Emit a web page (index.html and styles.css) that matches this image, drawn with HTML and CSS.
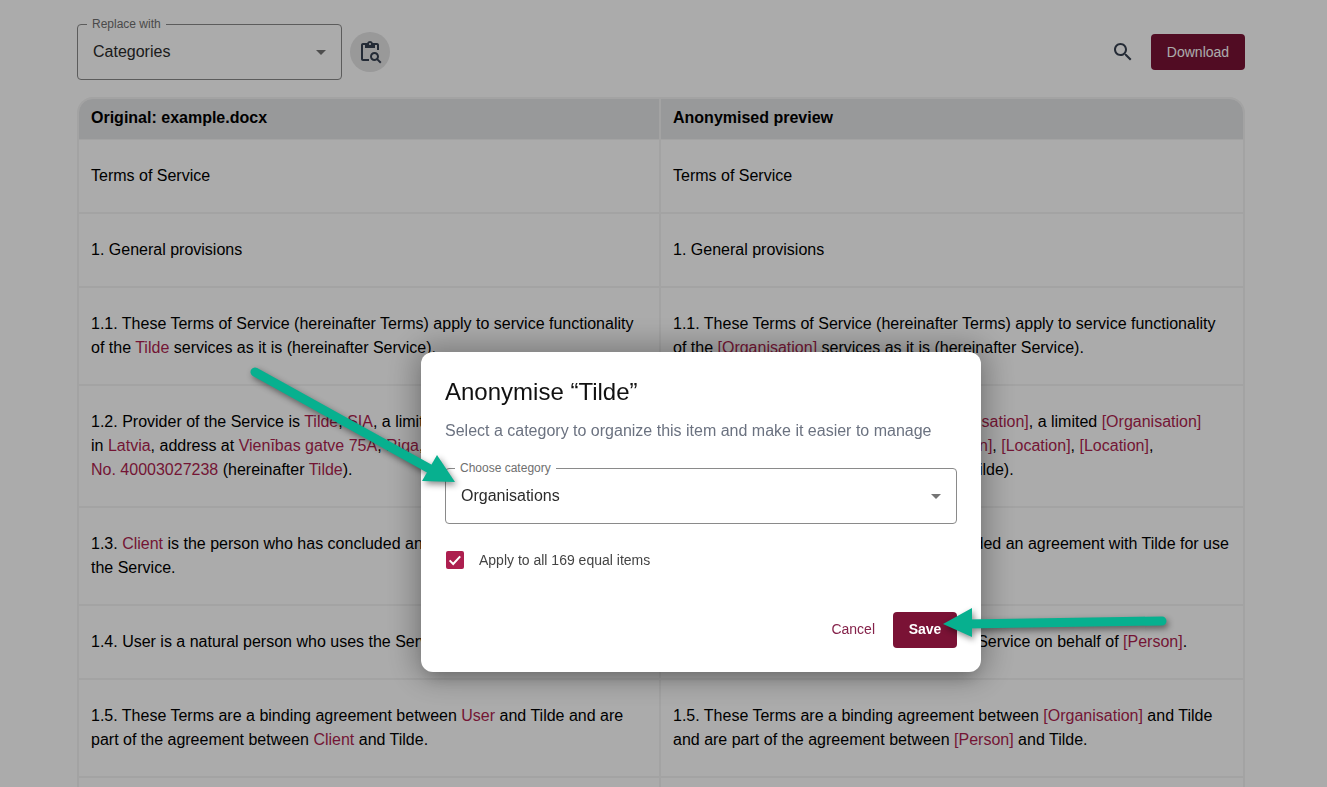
FILE: index.html
```html
<!DOCTYPE html>
<html lang="en">
<head>
    <meta charset="UTF-8">
    <meta name="viewport" content="width=device-width, initial-scale=1.0">
    <title>Anonymise</title>
    <link rel="stylesheet" href="styles.css">
</head>
<body>
    <div class="page">
        <div class="toolbar">
            <div class="field field-replace">
                <span class="field-label">Replace with</span>
                <span class="field-value">Categories</span>
                <svg class="caret" viewBox="0 0 24 24"><path d="M7 10l5 5 5-5z"/></svg>
            </div>
            <button class="round-btn">
                <svg viewBox="0 0 24 24"><path d="M5 5h2v3h10V5h2v5h2V5c0-1.1-.9-2-2-2h-4.18C14.4 1.84 13.3 1 12 1s-2.4.84-2.82 2H5c-1.1 0-2 .9-2 2v14c0 1.1.9 2 2 2h6v-2H5V5zm7-2c.55 0 1 .45 1 1s-.45 1-1 1-1-.45-1-1 .45-1 1-1z"/><path d="M20.3 18.9c.4-.7.7-1.5.7-2.4 0-2.5-2-4.5-4.5-4.5S12 14 12 16.5s2 4.5 4.5 4.5c.9 0 1.7-.3 2.4-.7l3.2 3.2 1.4-1.4-3.2-3.2zm-3.8.1c-1.4 0-2.5-1.1-2.5-2.5s1.1-2.5 2.5-2.5 2.5 1.1 2.5 2.5-1.1 2.5-2.5 2.5z"/></svg>
            </button>
            <div class="toolbar-right">
                <svg class="search-icon" viewBox="0 0 24 24"><path d="M15.5 14h-.79l-.28-.27C15.41 12.59 16 11.11 16 9.5 16 5.91 13.09 3 9.5 3S3 5.91 3 9.5 5.91 16 9.5 16c1.61 0 3.09-.59 4.23-1.57l.27.28v.79l5 4.99L20.49 19l-4.99-5zm-6 0C7.01 14 5 11.99 5 9.5S7.01 5 9.5 5 14 7.01 14 9.5 11.99 14 9.5 14z"/></svg>
                <button class="btn-primary btn-download">Download</button>
            </div>
        </div>

        <div class="doc-table">
            <div class="doc-row doc-head">
                <div class="cell">Original: example.docx</div>
                <div class="cell">Anonymised preview</div>
            </div>
            <div class="doc-row">
                <div class="cell">Terms of Service</div>
                <div class="cell">Terms of Service</div>
            </div>
            <div class="doc-row">
                <div class="cell">1. General provisions</div>
                <div class="cell">1. General provisions</div>
            </div>
            <div class="doc-row">
                <div class="cell">1.1. These Terms of Service (hereinafter Terms) apply to service functionality of the <span class="ent">Tilde</span> services as it is (hereinafter Service).</div>
                <div class="cell">1.1. These Terms of Service (hereinafter Terms) apply to service functionality of the <span class="ent">[Organisation]</span> services as it is (hereinafter Service).</div>
            </div>
            <div class="doc-row">
                <div class="cell">1.2. Provider of the Service is <span class="ent">Tilde</span>, <span class="ent">SIA</span>, a limited liability company registered<br>in <span class="ent">Latvia</span>, address at <span class="ent">Vienības gatve 75A</span>, <span class="ent">Riga</span>, registration<br><span class="ent">No. 40003027238</span> (hereinafter <span class="ent">Tilde</span>).</div>
                <div class="cell">1.2. Provider of the Service is Tilde, <span class="ent">[Organisation]</span>, a limited <span class="ent">[Organisation]</span><br>registered in <span class="ent">[Location]</span>, address at <span class="ent">[Location]</span>, <span class="ent">[Location]</span>, <span class="ent">[Location]</span>,<br><span class="ent">[Location]</span>, <span class="ent">[Person]</span>, <span class="ent">[Person]</span> (hereinafter Tilde).</div>
            </div>
            <div class="doc-row">
                <div class="cell">1.3. <span class="ent">Client</span> is the person who has concluded an agreement with Tilde for use the Service.</div>
                <div class="cell">1.3. <span class="ent">[Person]</span> is the person who has concluded an agreement with Tilde for use the Service.</div>
            </div>
            <div class="doc-row">
                <div class="cell">1.4. User is a natural person who uses the Service on behalf of <span class="ent">Client</span>.</div>
                <div class="cell">1.4. User is a natural person who uses the Service on behalf of <span class="ent">[Person]</span>.</div>
            </div>
            <div class="doc-row">
                <div class="cell">1.5. These Terms are a binding agreement between <span class="ent">User</span> and Tilde and are part of the agreement between <span class="ent">Client</span> and Tilde.</div>
                <div class="cell">1.5. These Terms are a binding agreement between <span class="ent">[Organisation]</span> and Tilde and are part of the agreement between <span class="ent">[Person]</span> and Tilde.</div>
            </div>
            <div class="doc-row">
                <div class="cell">2. Use of the Service</div>
                <div class="cell">2. Use of the Service</div>
            </div>
        </div>
    </div>

    <div class="overlay">
        <div class="dialog">
            <h2 class="dialog-title">Anonymise “Tilde”</h2>
            <p class="dialog-desc">Select a category to organize this item and make it easier to manage</p>
            <div class="field field-category">
                <span class="field-label">Choose category</span>
                <span class="field-value">Organisations</span>
                <svg class="caret" viewBox="0 0 24 24"><path d="M7 10l5 5 5-5z"/></svg>
            </div>
            <label class="check-row">
                <span class="check-box">
                    <svg viewBox="0 0 18 18"><path d="M3.6 9.4l3.6 3.6 7-7.6" fill="none" stroke="#fff" stroke-width="2"/></svg>
                </span>
                <span class="check-text">Apply to all 169 equal items</span>
            </label>
            <div class="dialog-actions">
                <button class="btn-text">Cancel</button>
                <button class="btn-primary btn-save">Save</button>
            </div>
        </div>
    </div>

    <svg class="arrows" viewBox="0 0 1327 787">
        <g class="arrow">
            <path d="M255 372 L430 469" fill="none" stroke="#07b08f" stroke-width="9" stroke-linecap="round"/>
            <path d="M455 482 L437 455 L422 481 Z" fill="#07b08f"/>
        </g>
        <g class="arrow">
            <path d="M1162 621 L965 624" fill="none" stroke="#07b08f" stroke-width="9" stroke-linecap="round"/>
            <path d="M943 624 L972 608 L972 637 Z" fill="#07b08f"/>
        </g>
    </svg>
</body>
</html>
```

FILE: styles.css
```css
* {
    box-sizing: border-box;
}

html, body {
    margin: 0;
    padding: 0;
    height: 100%;
    overflow: hidden;
    font-family: "Liberation Sans", Arial, sans-serif;
    color: #000;
    background-color: #fff;
}

.page {
    padding: 24px 82px 0 77px;
}

.toolbar {
    display: flex;
    align-items: center;
    height: 56px;
    margin-bottom: 17px;
}

.field {
    position: relative;
    display: flex;
    align-items: center;
    height: 56px;
    padding: 0 15px;
    border: 1px solid #8a8a8a;
    border-radius: 4px;
    font-size: 16px;
    color: #2b2b2b;
}

.field-replace {
    width: 265px;
}

.field-label {
    position: absolute;
    top: -8px;
    left: 9px;
    padding: 0 5px;
    background-color: #fff;
    font-size: 12px;
    line-height: 14px;
    color: #6f6f6f;
}

.caret {
    position: absolute;
    right: 8px;
    top: 15px;
    width: 24px;
    height: 24px;
    fill: #757575;
}

.round-btn {
    display: flex;
    align-items: center;
    justify-content: center;
    width: 40px;
    height: 40px;
    margin-left: 8px;
    padding: 0;
    border: none;
    border-radius: 50%;
    background-color: #e4e4e5;
}

.round-btn svg {
    width: 24px;
    height: 24px;
    fill: #374151;
}

.toolbar-right {
    display: flex;
    align-items: center;
    margin-left: auto;
}

.search-icon {
    width: 24px;
    height: 24px;
    margin-right: 16px;
    fill: #374151;
}

.btn-primary {
    height: 36px;
    border: none;
    border-radius: 4px;
    background-color: #7a1235;
    color: #fff;
    font-family: inherit;
    font-size: 14px;
}

.btn-download {
    width: 94px;
}

.doc-table {
    border: 2px solid #f3f3f3;
    border-bottom: none;
    border-radius: 16px 16px 0 0;
    overflow: hidden;
    font-size: 16px;
    line-height: 24px;
}

.doc-row {
    display: grid;
    grid-template-columns: 580px 1fr;
    border-bottom: 2px solid #f3f3f3;
}

.cell {
    padding: 24px 12px;
}

.cell + .cell {
    border-left: 2px solid #f3f3f3;
    padding-right: 10px;
}

.doc-head {
    background-color: #e3e4e6;
    border-bottom-width: 1px;
    font-weight: bold;
}

.doc-head .cell {
    padding-top: 7px;
    padding-bottom: 9px;
}

.ent {
    color: #ad1f4f;
}

.overlay {
    position: fixed;
    inset: 0;
    display: flex;
    justify-content: center;
    align-items: flex-start;
    padding: 352px 0 0 75px;
    background-color: rgba(0, 0, 0, 0.33);
}

.dialog {
    display: flex;
    flex-direction: column;
    width: 560px;
    height: 320px;
    padding: 24px;
    border-radius: 12px;
    background-color: #fff;
    box-shadow: 0 0 30px 6px rgba(0, 0, 0, 0.3), 0 11px 15px -7px rgba(0, 0, 0, 0.2);
}

.dialog-title {
    margin: 0;
    font-size: 24px;
    line-height: 32px;
    font-weight: normal;
    color: #111;
}

.dialog-desc {
    margin: 11px 0 25px;
    font-size: 16px;
    line-height: 24px;
    color: #6b7280;
}

.check-row {
    display: flex;
    align-items: center;
    margin-top: 27px;
    margin-left: 1px;
}

.check-box {
    display: block;
    width: 18px;
    height: 18px;
    border-radius: 2px;
    background-color: #ad1f4f;
}

.check-box svg {
    display: block;
    width: 18px;
    height: 18px;
}

.check-text {
    margin-left: 15px;
    font-size: 14px;
    color: #444;
}

.dialog-actions {
    display: flex;
    justify-content: flex-end;
    align-items: center;
    margin-top: auto;
}

.btn-text {
    margin-right: 18px;
    margin-bottom: 2px;
    padding: 0;
    border: none;
    background: none;
    font-family: inherit;
    font-size: 14px;
    color: #85224a;
}

.btn-save {
    width: 64px;
    padding: 0 0 2px;
    font-weight: bold;
}

.arrows {
    position: fixed;
    top: 0;
    left: 0;
    width: 1327px;
    height: 787px;
    pointer-events: none;
}

.arrow {
    filter: drop-shadow(2px 3px 3px rgba(0, 0, 0, 0.45));
}
```
